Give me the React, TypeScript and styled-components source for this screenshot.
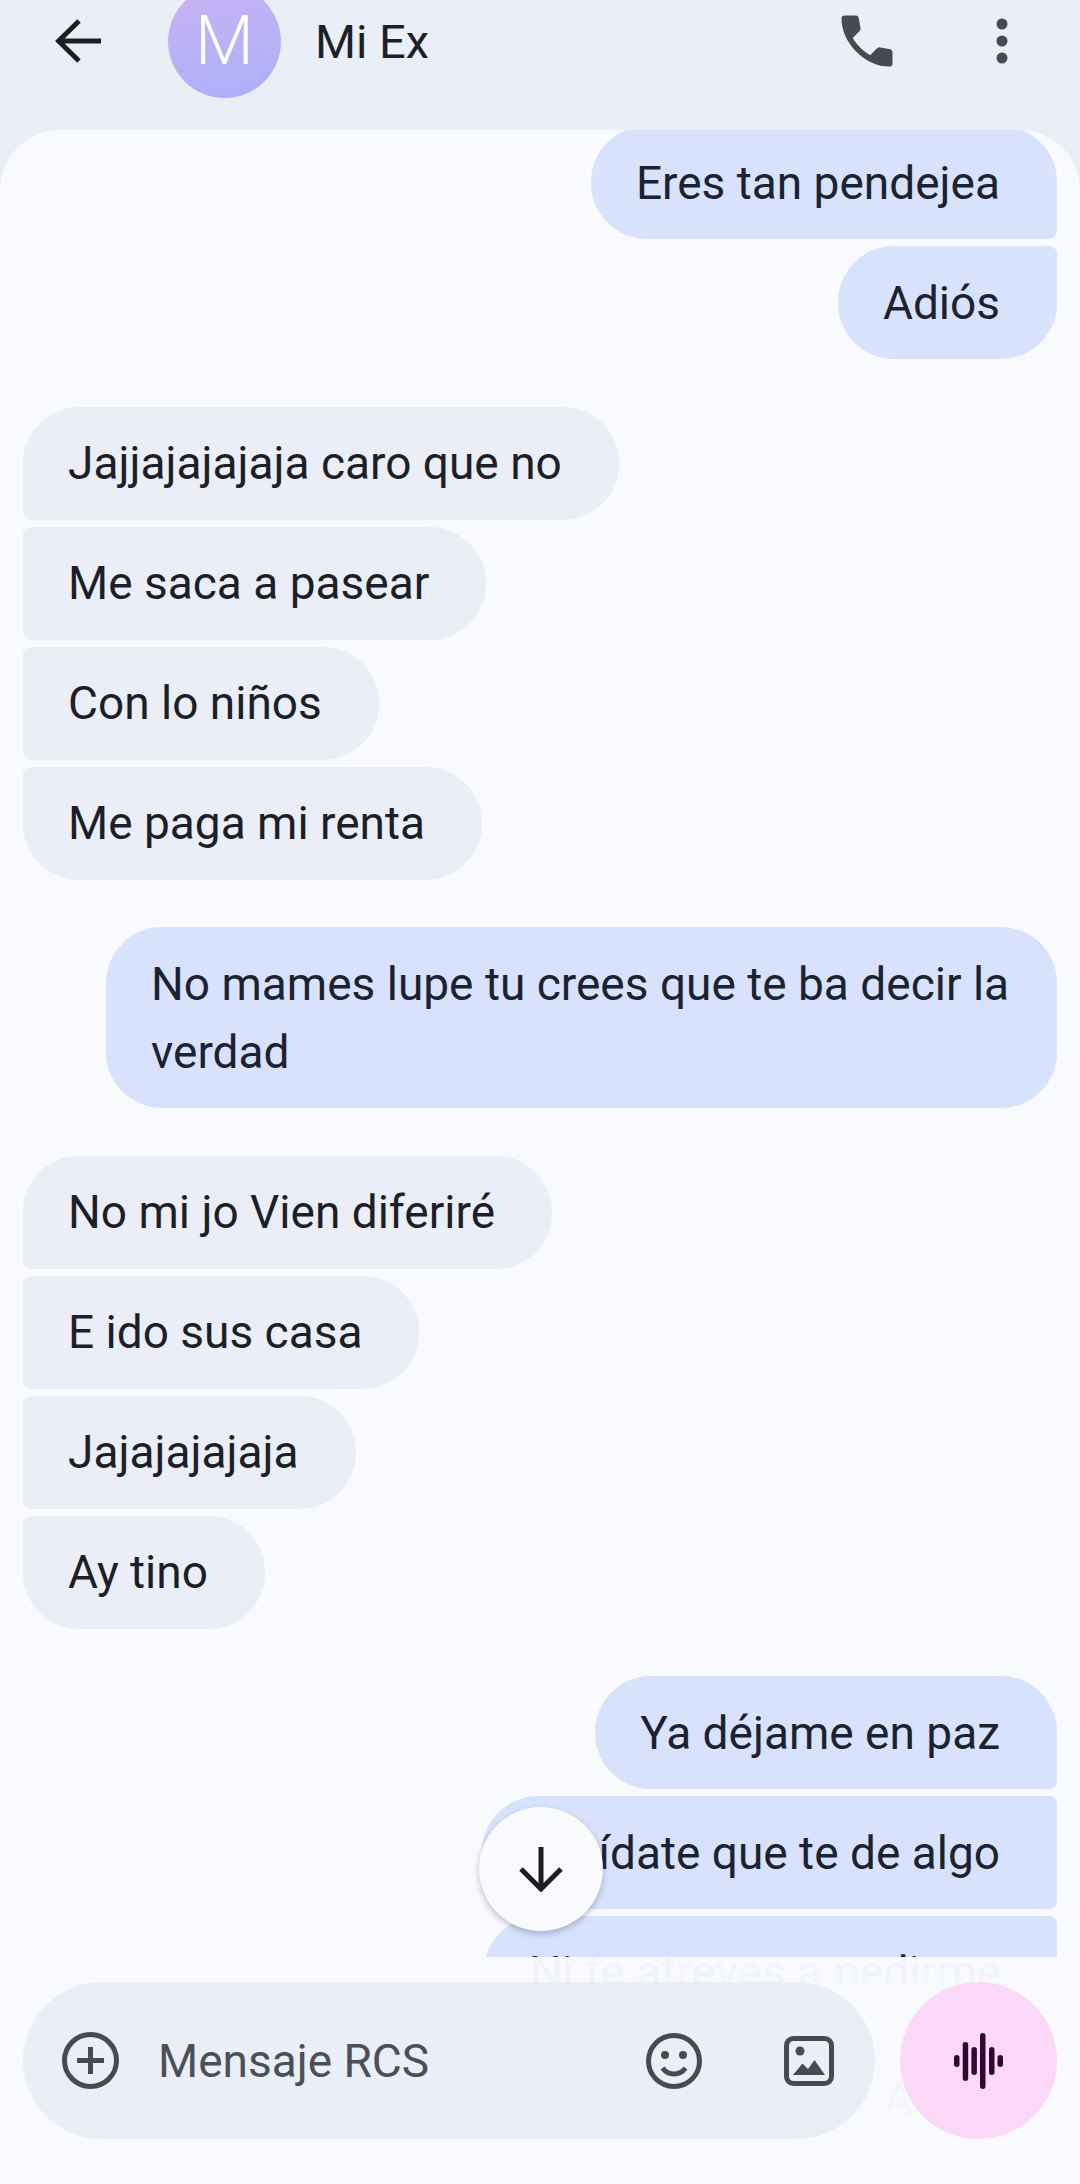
import React from "react";
import styled, { createGlobalStyle, css } from "styled-components";

type Side = "in" | "out";
type Pos = "first" | "middle" | "last" | "solo";

type MessageGroup = {
  side: Side;
  lines: string[];
};

const groups: MessageGroup[] = [
  { side: "out", lines: ["Eres tan pendejea", "Adiós"] },
  {
    side: "in",
    lines: ["Jajjajajajaja caro que no", "Me saca a pasear", "Con lo niños", "Me paga mi renta"],
  },
  { side: "out", lines: ["No mames lupe tu crees que te ba decir la verdad"] },
  { side: "in", lines: ["No mi jo Vien diferiré", "E ido sus casa", "Jajajajajaja", "Ay tino"] },
  { side: "out", lines: ["Ya déjame en paz", "Cuídate que te de algo", "Ni te atreves a pedirme"] },
];

// this one sits wider in the reference than the text needs
const minWidths: Record<string, number> = {
  "Cuídate que te de algo": 575,
};

const getPos = (index: number, total: number): Pos => {
  if (total === 1) return "solo";
  if (index === 0) return "first";
  return index === total - 1 ? "last" : "middle";
};

const App = () => {
  return (
    <Page>
      <GlobalStyle />
      <Header>
        <BackIcon width="48" height="46" viewBox="0 0 48 46">
          <path d="M46 23H4M24 3 3.5 23 24 43" />
        </BackIcon>
        <Avatar>M</Avatar>
        <Title>Mi Ex</Title>
        <HeaderActions>
          <svg width="68" height="68" viewBox="0 -960 960 960" fill="#454a54">
            <path d="M798-120q-125 0-247-54.5T329-329Q229-429 174.5-551T120-798q0-18 12-30t30-12h162q14 0 25 9.5t13 22.5l26 140q2 16-1 27t-11 19l-97 98q20 37 47.5 71.5T387-386q31 31 65 57.5t72 48.5l94-94q9-9 23.5-13.5T670-390l138 28q14 4 23 14.5t9 23.5v162q0 18-12 30t-30 12Z" />
          </svg>
          <svg width="12" height="46" viewBox="0 0 12 46" fill="#454a54">
            <circle cx="6" cy="6" r="5.5" />
            <circle cx="6" cy="23" r="5.5" />
            <circle cx="6" cy="40" r="5.5" />
          </svg>
        </HeaderActions>
      </Header>
      <Panel>
        <Thread>
          <Stack>
            {groups.map((group, g) => (
              <Group key={g} $side={group.side}>
                {group.lines.map((line, i) => (
                  <Bubble
                    key={i}
                    $side={group.side}
                    $pos={getPos(i, group.lines.length)}
                    $minWidth={minWidths[line]}
                  >
                    {line}
                  </Bubble>
                ))}
              </Group>
            ))}
          </Stack>
        </Thread>
        <ScrollButton>
          <svg width="46" height="46" viewBox="0 0 46 46">
            <path d="M23 1v42M3 23l20 20 20-20" fill="none" stroke="#1c1e24" strokeWidth="5" />
          </svg>
        </ScrollButton>
        <Footer>
          <GhostLine>
            <GhostText>Ni te atreves a pedirme</GhostText>
          </GhostLine>
          <GhostMark>A</GhostMark>
          <InputPill>
            <ActionIcon width="57" height="57" viewBox="0 0 57 57">
              <circle cx="28.5" cy="28.5" r="26" />
              <path d="M28.5 15v27M15 28.5h27" />
            </ActionIcon>
            <Placeholder>Mensaje RCS</Placeholder>
            <PillIcons>
              <ActionIcon width="56" height="56" viewBox="0 0 56 56">
                <circle cx="28" cy="28" r="25.5" />
                <path d="M16.5 35c3 4 7 6 11.500 6s8.500-2 11.500-6" />
                <Filled as="circle" cx="19" cy="22" r="4" />
                <Filled as="circle" cx="37" cy="22" r="4" />
              </ActionIcon>
              <ActionIcon width="50" height="50" viewBox="0 0 50 50">
                <rect x="2.500" y="2.500" width="45" height="45" rx="7" />
                <Filled as="circle" cx="16" cy="15" r="4.500" />
                <Filled as="path" d="M9 39l9.500-11.500L24 33l6.500-9L41 39z" />
              </ActionIcon>
            </PillIcons>
          </InputPill>
          <VoiceButton>
            <svg width="50" height="56" viewBox="0 0 50 56" fill="#2e0a33">
              <rect x="0" y="22" width="5.500" height="12" rx="2.750" />
              <rect x="8.700" y="9" width="5.500" height="39" rx="2.750" />
              <rect x="17.400" y="14" width="5.500" height="28" rx="2.750" />
              <rect x="26" y="0" width="5.500" height="56" rx="2.750" />
              <rect x="35" y="14" width="5.500" height="28" rx="2.750" />
              <rect x="43.500" y="22" width="5.500" height="12" rx="2.750" />
            </svg>
          </VoiceButton>
        </Footer>
      </Panel>
    </Page>
  );
};

const GlobalStyle = createGlobalStyle`
  html, body {
    margin: 0;
    background: #f8fafe;
  }
  * {
    box-sizing: border-box;
  }
`;

const Page = styled.div`
  width: 1080px;
  height: 2184px;
  display: flex;
  flex-direction: column;
  overflow: hidden;
  background: #eaeef6;
  font-family: Roboto, "Noto Sans", sans-serif;
  color: #1b1f28;
`;

const Header = styled.header`
  height: 130px;
  flex: none;
  display: flex;
  align-items: center;
  padding: 0 72px 48px 55px;
`;

const BackIcon = styled.svg`
  flex: none;
  fill: none;
  stroke: #1c1e24;
  stroke-width: 5;
`;

const Avatar = styled.div`
  width: 113px;
  height: 113px;
  flex: none;
  margin: 0 34px 0 65px;
  border-radius: 50%;
  display: flex;
  align-items: center;
  justify-content: center;
  background: linear-gradient(170deg, #c9b3f2, #abb0f9);
  color: #fff;
  font-size: 68px;
  font-weight: 300;
`;

const Title = styled.div`
  font-size: 47px;
  color: #1b1f28;
`;

const HeaderActions = styled.div`
  margin-left: auto;
  display: flex;
  align-items: center;
  gap: 95px;
`;

const Panel = styled.main`
  flex: 1;
  min-height: 0;
  position: relative;
  display: flex;
  flex-direction: column;
  background: #f8fafe;
  border-radius: 60px 60px 0 0;
  overflow: hidden;
`;

const Thread = styled.div`
  height: 1827px;
  flex: none;
  overflow: hidden;
  padding: 0 23px;
`;

const Stack = styled.div`
  margin-top: -4px;
  display: flex;
  flex-direction: column;
  gap: 47.5px;
`;

const Group = styled.section<{ $side: Side }>`
  display: flex;
  flex-direction: column;
  gap: 7px;
  align-items: ${(p) => (p.$side === "out" ? "flex-end" : "flex-start")};
`;

const corners = (side: Side, pos: Pos) => {
  if (pos === "solo") return "56px";
  const big = "56px";
  const small = "8px";
  const top = pos === "first" ? big : small;
  const bottom = pos === "last" ? big : small;
  return side === "out"
    ? `${big} ${top} ${bottom} ${big}`
    : `${top} ${big} ${big} ${bottom}`;
};

const Bubble = styled.div<{ $side: Side; $pos: Pos; $minWidth?: number }>`
  padding: 22.5px ${(p) => (p.$pos === "solo" ? "45px" : "57px")} 22.5px 45px;
  font-size: 46px;
  line-height: 68px;
  border-radius: ${(p) => corners(p.$side, p.$pos)};
  ${(p) =>
    p.$minWidth &&
    css`
      min-width: ${p.$minWidth}px;
      text-align: right;
    `}
  ${(p) =>
    p.$side === "out"
      ? css`
          background: #d8e2fd;
          color: #1b2230;
          max-width: 951px;
        `
      : css`
          background: #ebeef6;
          color: #1b1f28;
        `}
`;

const ScrollButton = styled.div`
  position: absolute;
  left: 479px;
  top: 1677px;
  width: 124px;
  height: 124px;
  border-radius: 50%;
  display: flex;
  align-items: center;
  justify-content: center;
  background: #f8fafe;
  box-shadow: 0 3px 6px rgba(40, 44, 60, 0.28);
`;

const Footer = styled.footer`
  flex: 1;
  position: relative;
  display: flex;
  align-items: flex-start;
  gap: 25px;
  padding: 25px 23px 0;
`;

const GhostLine = styled.div`
  position: absolute;
  left: 530px;
  top: 0;
  height: 26px;
  overflow: hidden;
`;

const GhostText = styled.div`
  margin-top: -19px;
  font-size: 46px;
  line-height: 68px;
  white-space: nowrap;
  color: #f1f4fb;
`;

const GhostMark = styled.div`
  position: absolute;
  left: 884px;
  top: 115px;
  font-size: 46px;
  color: #f3f5fb;
`;

const InputPill = styled.div`
  position: relative;
  width: 852px;
  height: 157px;
  flex: none;
  display: flex;
  align-items: center;
  padding: 0 41px 0 39px;
  border-radius: 79px;
  background: #eaeef6;
`;

const ActionIcon = styled.svg`
  flex: none;
  fill: none;
  stroke: #454a54;
  stroke-width: 5;
`;

const Filled = styled.circle`
  fill: #454a54;
  stroke: none;
`;

const Placeholder = styled.div`
  margin-left: 39px;
  font-size: 46px;
  color: #4a4f58;
`;

const PillIcons = styled.div`
  margin-left: auto;
  display: flex;
  align-items: center;
  gap: 82px;
`;

const VoiceButton = styled.div`
  position: relative;
  width: 157px;
  height: 157px;
  flex: none;
  border-radius: 50%;
  display: flex;
  align-items: center;
  justify-content: center;
  background: #fbd8f7;
`;

export default App;
